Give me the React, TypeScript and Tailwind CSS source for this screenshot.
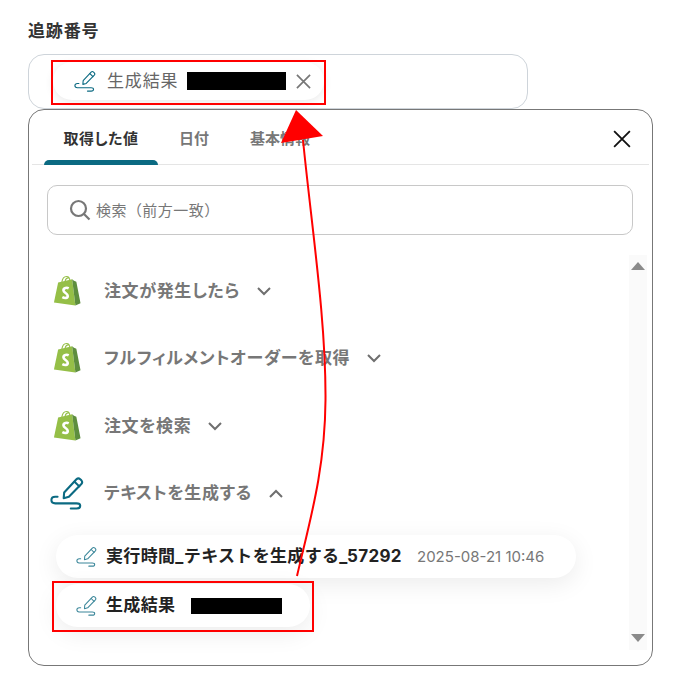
import React from "react";

function PenIcon({ size, sw = 2, color = "#0b6a82", opacity = 1 }: { size: number; sw?: number; color?: string; opacity?: number }) {
  return (
    <svg width={size} height={size} viewBox="0 0 36 36" fill="none" stroke={color} strokeWidth={sw} strokeLinecap="round" strokeLinejoin="round" opacity={opacity} className="shrink-0">
      <path d="M15 17.5 L28 3.5 C29.2 2.3 30.8 2.3 32 3.4 L33.2 4.6 C34.3 5.8 34.2 7.3 33.2 8.4 L20 22 L14.5 23.5 Z" />
      <path d="M26 6 L31 11" />
      <path d="M8 22 H5.5 C3 22 1.5 23.5 1.5 25.5 C1.5 27.5 3 29 5.5 29 H28 C30.5 29 32 30 32 31.5 C32 33.5 30.5 34.5 28 34.5 H22" />
    </svg>
  );
}

function ShopifyIcon() {
  return (
    <svg width="28" height="32" viewBox="0 0 30 33" className="shrink-0">
      <path d="M1 28.8 L5.5 7.5 L20.5 4 L24 32 Z" fill="#95bf47" />
      <path d="M20.5 4 L22.5 5.5 L25 6.5 L29.5 29.5 L24 32 Z" fill="#5e8e3e" />
      <path d="M9.5 7 C10 3.5 12 1 14.5 1 C17 1 18 3.5 18 6 M13 6 C13.5 3.5 15 2 17 2.5" fill="none" stroke="#95bf47" strokeWidth="1.2" />
      <path d="M16.8 13.6 C15 12.6 11.2 13 11.2 15.8 C11.2 18.6 15.8 18.8 15.8 21.8 C15.8 24.4 12.5 24.4 10 23" fill="none" stroke="#fff" strokeWidth="2.8" />
    </svg>
  );
}

function XIcon({ size, color, sw }: { size: number; color: string; sw: number }) {
  return (
    <svg width={size} height={size} viewBox="0 0 16 16" fill="none" stroke={color} strokeWidth={sw} className="shrink-0">
      <path d="M1 1 L15 15 M15 1 L1 15" />
    </svg>
  );
}

function Chevron({ up }: { up?: boolean }) {
  return (
    <svg width="14" height="9" viewBox="0 0 14 9" fill="none" stroke="#6f6f6f" strokeWidth="2" className="shrink-0">
      <path d={up ? "M1 8 L7 2 L13 8" : "M1 1 L7 7 L13 1"} />
    </svg>
  );
}

function Row({ icon, label, up, mb }: { icon: React.ReactNode; label: string; up?: boolean; mb: string }) {
  return (
    <div className={`flex items-center h-[34px] ${mb}`}>
      <div className="w-[36px] flex justify-center mr-[19px]">{icon}</div>
      <span className="text-[17px] font-bold text-[#777777] tracking-[0.035em] leading-none [font-feature-settings:'palt']">{label}</span>
      <span className="ml-[17px]"><Chevron up={up} /></span>
    </div>
  );
}

export default function App() {
  return (
    <div className="relative w-[683px] h-[694px] bg-white overflow-hidden font-['Inter','Noto_Sans_CJK_JP',sans-serif]">
      <div className="pl-[28px] pt-[20px]">
        <div className="h-[22px] flex items-center text-[17px] font-bold text-[#333333] tracking-[0.05em] leading-none [font-feature-settings:'palt']">追跡番号</div>
        <div className="mt-[12px] w-[500px] h-[55px] rounded-[16px] border border-[#ced4da] pl-[24px] pt-[7px]">
          <div className="w-[271px] h-[38px] rounded-full bg-white shadow-[0_2px_10px_rgba(0,0,0,0.09)] flex items-center pl-[21px]">
            <PenIcon size={22} sw={1.8} />
            <span className="ml-[11px] text-[17px] text-[#666666] tracking-[0.05em] leading-none w-[80px] [font-feature-settings:'palt']">生成結果</span>
            <span className="w-[99px] h-[18px] bg-black" />
            <span className="ml-[10px]"><XIcon size={15} color="#777777" sw={1.8} /></span>
          </div>
        </div>

        <div className="w-[625px] h-[557px] rounded-[16px] border border-[#777777] bg-white px-[3px] pt-0">
          <div className="relative flex h-[55px] items-end border-b border-[#e5e5e5] pl-[12px]">
            <div className="w-[114px] h-[55px] flex items-center justify-center pt-[5px] relative text-[15px] font-bold text-[#333333] tracking-[0.03em] [font-feature-settings:'palt']">
              取得した値
              <span className="absolute left-0 right-0 -bottom-px h-[5px] rounded-t-[5px] bg-[#0b6a82]" />
            </div>
            <div className="ml-[21px] h-[55px] flex items-center pt-[5px] text-[15px] font-bold text-[#777777]">日付</div>
            <div className="ml-[41px] h-[55px] flex items-center pt-[5px] text-[15px] font-bold text-[#777777]">基本情報</div>
            <div className="absolute right-[18px] top-[20px]"><XIcon size={18} color="#111111" sw={1.6} /></div>
          </div>

          <div className="mt-[20px] ml-[15px] w-[586px] h-[50px] rounded-[10px] border border-[#c8c8c8] flex items-center pl-[21px]">
            <svg width="22" height="22" viewBox="0 0 22 22" fill="none" stroke="#777777" strokeWidth="2.2" className="shrink-0">
              <circle cx="9.5" cy="9.5" r="7.5" />
              <path d="M15 15 L20.5 20.5" />
            </svg>
            <span className="ml-[5px] text-[15px] text-[#777777] tracking-[0.03em] leading-none">検索（前方一致）</span>
          </div>

          <div className="relative mt-[20px] h-[395px] pt-[19px] pl-[17px]">
            <div className="absolute right-[2px] top-0 bottom-0 w-[18px] bg-[#fafafa]">
              <span className="absolute left-[2px] top-[7px] w-0 h-0 border-x-[7px] border-x-transparent border-b-[8px] border-b-[#8a8a8a]" />
              <span className="absolute left-[2px] bottom-[8px] w-0 h-0 border-x-[7px] border-x-transparent border-t-[8px] border-t-[#8a8a8a]" />
            </div>
            <Row icon={<ShopifyIcon />} label="注文が発生したら" mb="mb-[33px]" />
            <Row icon={<ShopifyIcon />} label="フルフィルメントオーダーを取得" mb="mb-[34px]" />
            <Row icon={<ShopifyIcon />} label="注文を検索" mb="mb-[33px]" />
            <Row icon={<PenIcon size={34} sw={2.2} />} label="テキストを生成する" up mb="mb-[25px]" />

            <div className="w-[520px] h-[43px] ml-[7px] rounded-full bg-white shadow-[0_6px_24px_rgba(0,0,0,0.08)] flex items-center pl-[20px]">
              <PenIcon size={21} sw={1.8} opacity={0.8} />
              <span className="ml-[9px] pb-[1px] w-[311px] text-[17px] font-bold text-[#222222] tracking-[0.02em] leading-none whitespace-nowrap">実行時間_テキストを生成する_57292</span>
              <span className="pb-[1px] text-[15px] text-[#777777] leading-none whitespace-nowrap">2025-08-21 10:46</span>
            </div>
            <div className="mt-[6px] w-[254px] h-[43px] ml-[7px] rounded-full bg-white shadow-[0_6px_24px_rgba(0,0,0,0.08)] flex items-center pl-[20px]">
              <PenIcon size={21} sw={1.8} opacity={0.8} />
              <span className="ml-[9px] pb-[1px] w-[85px] text-[17px] font-bold text-[#222222] tracking-[0.02em] leading-none whitespace-nowrap">生成結果</span>
              <span className="w-[91px] h-[16px] bg-black" />
            </div>
          </div>
        </div>
      </div>

      {/* annotations */}
      <div className="absolute left-[51px] top-[60px] w-[275px] h-[45px] border-2 border-[#ff0000]" />
      <div className="absolute left-[52px] top-[581px] w-[262px] h-[51px] border-2 border-[#ff0000]" />
      <svg width="683" height="694" viewBox="0 0 683 694" className="absolute left-0 top-0 pointer-events-none" fill="none">
        <path d="M297 576 C310 520 325 470 325.5 400 C326 320 312 230 303 140" stroke="#ff0000" strokeWidth="2" />
        <path d="M296 110 L323 136 L281 143 Z" fill="#ff0000" />
      </svg>
    </div>
  );
}
